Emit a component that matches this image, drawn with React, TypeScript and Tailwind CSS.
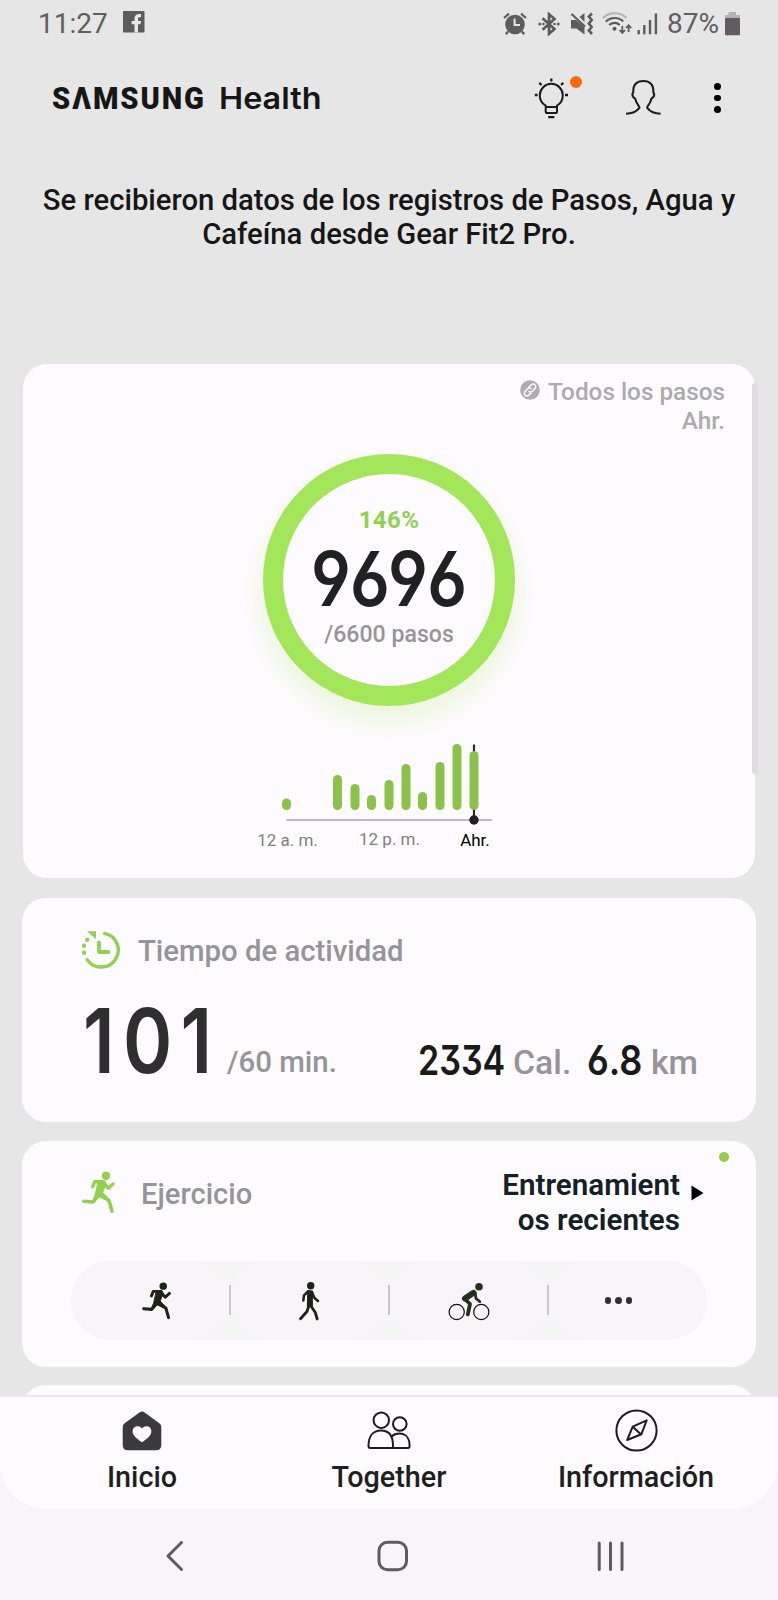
import { type ReactNode } from "react";

interface Bar {
  x: number;
  top: number;
}

const bars: Bar[] = [
  { x: 27.5, top: 60.5 },
  { x: 78.5, top: 37 },
  { x: 96, top: 46 },
  { x: 112.5, top: 57 },
  { x: 130, top: 42 },
  { x: 147, top: 26 },
  { x: 163.5, top: 54 },
  { x: 181, top: 24 },
  { x: 198, top: 6 },
];

/* ---------- icons ---------- */

function AlarmIcon() {
  return (
    <svg width="24" height="24" viewBox="0 0 24 24" fill="none">
      <circle cx="12" cy="12.5" r="9.8" fill="#5c5c5c" />
      <path d="M1 6 L6 1.6 M23 6 L18 1.6" stroke="#5c5c5c" strokeWidth="2.2" />
      <path d="M5 19.5 L2.8 22.3 M19 19.5 L21.2 22.3" stroke="#5c5c5c" strokeWidth="2.2" />
      <path d="M11.6 6.5 V13 H17" stroke="#e6e6e6" strokeWidth="2" />
    </svg>
  );
}

function BluetoothIcon() {
  return (
    <svg width="22" height="24" viewBox="0 0 22 24" fill="none" stroke="#5c5c5c">
      <path d="M4.5 6.2 L16.5 17 L11 21.8 V2.2 L16.5 7 L4.5 17.8" strokeWidth="2.7" />
      <circle cx="1.8" cy="12" r="1.5" fill="#5c5c5c" stroke="none" />
      <circle cx="5.4" cy="12" r="1.3" fill="#5c5c5c" stroke="none" />
      <circle cx="16.4" cy="12" r="1.3" fill="#5c5c5c" stroke="none" />
      <circle cx="20.2" cy="12" r="1.5" fill="#5c5c5c" stroke="none" />
    </svg>
  );
}

function MuteIcon() {
  return (
    <svg width="24" height="24" viewBox="0 0 24 24" fill="none">
      <path d="M1 8 H6 L14.5 15 V22.5 L6.5 16.5 H1 Z" fill="#5c5c5c" />
      <path d="M9.5 5 L14.5 1 V10 Z" fill="#5c5c5c" />
      <path d="M1.5 2 L15 14.5" stroke="#5c5c5c" strokeWidth="2.2" />
      <path d="M22 1.5 L18.8 4.5 L21.7 8 L18.8 11.5 L21.7 15 L18.8 18.5 L22 22" stroke="#5c5c5c" strokeWidth="2.6" />
    </svg>
  );
}

function WifiIcon() {
  return (
    <svg width="30" height="24" viewBox="0 0 30 24" fill="none">
      <path d="M.8 6.2 C7 -.4 18 -.4 24.4 6" stroke="#b2b2b2" strokeWidth="2" />
      <path d="M3.8 9.7 C8.5 4.8 16.5 4.8 21.2 9.4" stroke="#5c5c5c" strokeWidth="2.1" />
      <path d="M7.2 13.1 C10 10.2 15 10.2 17.8 13" stroke="#5c5c5c" strokeWidth="2.1" />
      <circle cx="12.5" cy="16.8" r="2" fill="#5c5c5c" />
      <path d="M20.3 14 V20.5 M17.6 18 L20.3 20.9 L23 18 M26.6 20 V13.5 M23.9 16 L26.6 13.2 L29.3 16" stroke="#5c5c5c" strokeWidth="1.8" />
    </svg>
  );
}

function SignalIcon() {
  return (
    <svg width="21" height="24" viewBox="0 0 21 24" stroke="#5c5c5c" strokeWidth="2.4">
      <path d="M1.7 18 V22.3 M7.3 13 V22.3 M13 8 V22.3 M18.9 1.6 V22.3" />
    </svg>
  );
}

function BatteryIcon() {
  return (
    <svg width="17" height="24" viewBox="0 0 17 24">
      <path d="M4.5 0 H12 V3 H16 V7 H1 V3 H4.5 Z" fill="#b2b2b2" />
      <rect x="1" y="6" width="15" height="17.3" rx="1" fill="#605c60" />
    </svg>
  );
}

function FacebookIcon() {
  return (
    <svg width="22" height="22" viewBox="0 0 22 22">
      <rect width="21.5" height="21.5" rx=".8" fill="#5c5c5c" />
      <path d="M11.5 21.5 V13.2 H8.6 V10 H11.5 V7.6 C11.5 4.6 13.3 3 16 3 H18 V6.2 H16.6 C15.3 6.2 15 6.8 15 7.8 V10 H18 L17.5 13.2 H15 V21.5 Z" fill="#e9e9e9" />
    </svg>
  );
}

function BulbIcon() {
  return (
    <svg width="37" height="44" viewBox="0 0 37 44" fill="none" stroke="#1c1c1c" strokeWidth="2">
      <path d="M12.7 31 V29.6 C9 27.6 6.8 23.7 6.8 19.3 A11.5 11.5 0 0 1 29.8 19.3 C29.8 23.7 27.6 27.6 24 29.6 V35.4 Q24 37 22.4 37 H14.3 Q12.7 37 12.7 35.4 V31 H24" />
      <path d="M15.2 41.2 H21.4 M18.3 2.4 V5.4 M1.8 19 H4.6 M32 19 H35 M6.3 6.9 L8.5 9 M30.3 6.9 L28.1 9" strokeWidth="2.3" />
    </svg>
  );
}

function PersonIcon() {
  return (
    <svg width="39" height="40" viewBox="0 0 39 40" fill="none" stroke="#1c1c1c" strokeWidth="2.1" strokeLinejoin="round">
      <path d="M2 35.8 C7.5 35.7 12.5 33.6 15.4 29.9 C16.2 28.2 12.2 26.4 11.3 20.8 C8.6 19.6 7.6 16.4 9.3 14.2 C8.8 6.6 12.8 3 19.3 3 C25.8 3 29.8 6.6 29.3 14.2 C31 16.4 30 19.6 27.3 20.8 C26.4 26.4 22.4 28.2 23.2 29.9 C26.1 33.6 31.1 35.7 36.6 35.8" />
    </svg>
  );
}

function LinkBadge() {
  return (
    <svg width="20" height="20" viewBox="0 0 20 20" fill="none">
      <circle cx="10" cy="10" r="9.8" fill="#aeaeb0" />
      <g stroke="#fffbff" strokeWidth="1.5" strokeLinecap="round">
        <path d="M9 7 L11.2 4.9 A2.6 2.6 0 0 1 15 8.6 L12.3 11.3 A2.6 2.6 0 0 1 9 11.4" />
        <path d="M11 13 L8.8 15.1 A2.6 2.6 0 0 1 5 11.4 L7.7 8.7 A2.6 2.6 0 0 1 11 8.6" />
      </g>
    </svg>
  );
}

function ActivityIcon() {
  return (
    <svg width="40" height="40" viewBox="0 0 40 40" fill="none" stroke="#92d050" strokeLinecap="round">
      <path d="M23.6 3.4 A17 17 0 1 1 6.2 29.6" strokeWidth="3.4" />
      <path d="M18 12.5 V22 H27.5" strokeWidth="3.8" strokeLinejoin="round" />
      <path d="M6 1.3 H15 V9.3 Z" fill="#92d050" stroke="none" />
      <g fill="#92d050" stroke="none">
        <circle cx="6.2" cy="9.7" r="2.2" />
        <circle cx="3" cy="15.8" r="2.2" />
        <circle cx="3" cy="22.7" r="2.2" />
      </g>
    </svg>
  );
}

function RunnerIcon({ size, color }: { size: number; color: string }) {
  return (
    <svg width={size * 0.77} height={size} viewBox="0 0 33 43" fill="none" stroke={color} strokeWidth="3.3" strokeLinecap="round" strokeLinejoin="round">
      <circle cx="24" cy="4.7" r="4.2" fill={color} stroke="none" />
      <path d="M10.6 15.7 L12.7 10.6 H20 M21.5 12 L26.3 17.2 L31 12.9" />
      <path d="M16.5 9.7 H22.5 L24 13 L20.6 21.5 L26 27.5 L25 29 L17 26 L12.5 31 L10.5 30 L13 24 Z" fill={color} strokeWidth="1" />
      <path d="M15.5 25 L10.9 31 L1.8 30.3" strokeWidth="3.5" />
      <path d="M17.5 23.8 L27 29.6 L30 40.3" strokeWidth="3.5" />
    </svg>
  );
}

function WalkerIcon() {
  return (
    <svg width="23" height="40" viewBox="0 0 23 40" fill="none" stroke="#1d2319" strokeWidth="2.8" strokeLinecap="round" strokeLinejoin="round">
      <circle cx="12.7" cy="4.7" r="3.7" fill="#1d2319" stroke="none" />
      <path d="M10 10.5 L6 14.3 L5.3 19.5 M14 11 L16.3 16.8 L20 20" strokeWidth="2.5" />
      <path d="M10 9.8 L14 10.2 L14.2 25 H9.7 Z" fill="#1d2319" strokeWidth="1.6" />
      <path d="M10.8 25 L9 30.5 L2.5 37.7 M13 25 L17.3 31.5 L19.2 38" />
    </svg>
  );
}

function CyclistIcon() {
  return (
    <svg width="44" height="40" viewBox="0 0 44 40" fill="none" stroke="#25301f" strokeLinecap="round" strokeLinejoin="round">
      <circle cx="9.7" cy="31" r="7.6" stroke="#111" strokeWidth="1.2" />
      <circle cx="34.3" cy="31" r="7.6" stroke="#111" strokeWidth="1.2" />
      <circle cx="32" cy="5.7" r="3.8" fill="#25301f" stroke="none" />
      <path d="M18 17.5 L26.5 11.8" strokeWidth="6" />
      <path d="M28.2 12 L29 17.5 L32.8 20.6" strokeWidth="2.8" />
      <path d="M18 18 L23 23 L20.8 33.3" strokeWidth="3.8" />
    </svg>
  );
}

function HomeIcon() {
  return (
    <svg width="40" height="40" viewBox="0 0 40 40">
      <path d="M17.4 1.6 Q20 -.6 22.6 1.6 L37 12 Q39.3 13.6 39.3 16 V34 Q39.3 39.3 34 39.3 H6 Q.7 39.3 .7 34 V16 Q.7 13.6 3 12 Z" fill="#3a393b" />
      <path d="M20 31.3 C14.5 27.5 10.6 24.4 10.6 20.2 C10.6 15 17.2 13.3 20 17.6 C22.8 13.3 29.4 15 29.4 20.2 C29.4 24.4 25.5 27.5 20 31.3 Z" fill="#fffbff" />
    </svg>
  );
}

function PeopleIcon() {
  return (
    <svg width="44" height="40" viewBox="0 0 44 40" fill="none" stroke="#1c1c1c" strokeWidth="2" strokeLinejoin="round">
      <circle cx="14.3" cy="9.2" r="7.7" />
      <circle cx="32.8" cy="13" r="6.8" />
      <path d="M1.5 35 C1.5 25.5 6 19.6 14 19.6 C22 19.6 26 25.5 26 35 V36.9 H3.2 Q1.5 36.9 1.5 35 Z" />
      <path d="M24.6 25.6 C26.5 23.6 29.5 22.6 32.5 22.6 C39 22.6 42.6 27.6 42.6 35 Q42.6 36.9 41 36.9 H26" />
    </svg>
  );
}

function CompassIcon() {
  return (
    <svg width="43" height="43" viewBox="0 0 43 43" fill="none" stroke="#1c1c1c" strokeWidth="2" strokeLinejoin="round">
      <circle cx="21.5" cy="21.5" r="20.1" />
      <path d="M31.7 11.3 L26.3 25.3 L12.2 31 L17.7 17.7 Z M17.7 17.7 L25.8 25.3" />
    </svg>
  );
}

/* ---------- building blocks ---------- */

// Condensed digits with open six and nine and a flat-topped three
function Figure({ children, className }: { children: ReactNode; className: string }) {
  return (
    <span
      className={`inline-block whitespace-nowrap origin-left font-['Inter',sans-serif] [font-feature-settings:'cv03','cv04','cv09'] ${className}`}
    >
      {children}
    </span>
  );
}

function StatusBar() {
  return (
    <div className="h-12 flex items-center justify-between pl-[38px] pr-[37px] text-[28px] leading-none text-[#5f5f5f]">
      <div className="flex items-center gap-[15px]">
        <span>11:27</span>
        <span className="-mt-1"><FacebookIcon /></span>
      </div>
      <div className="flex items-center">
        <span className="mr-[11px]"><AlarmIcon /></span>
        <span className="mr-[10px]"><BluetoothIcon /></span>
        <span className="mr-[8px]"><MuteIcon /></span>
        <span className="mr-[5px]"><WifiIcon /></span>
        <span className="mr-[9px]"><SignalIcon /></span>
        <span className="mr-[5px] w-[52px] whitespace-nowrap">87%</span>
        <BatteryIcon />
      </div>
    </div>
  );
}

function Header() {
  return (
    <header className="h-[100px] flex items-center pl-[51px] pr-[57px] text-[#161616]">
      <svg width="275" height="40" viewBox="0 0 275 40" fill="#161616" aria-label="Samsung Health">
        <g transform="scale(.94 1)" fontFamily="Roboto, sans-serif" fontWeight="900" fontSize="31">
          <text x="1.2" y="31" textLength="161.5" lengthAdjust="spacing">SΛMSUNG</text>
        </g>
        <text x="168" y="31" textLength="102.5" lengthAdjust="spacingAndGlyphs" fontFamily="Inter, sans-serif" fontWeight="600" fontSize="30.5">Health</text>
      </svg>
      <div className="ml-auto flex items-center">
        <div className="relative mr-[54px]">
          <BulbIcon />
          <span className="absolute left-[37px] top-0 size-[11.5px] rounded-full bg-[#fb6a0c]" />
        </div>
        <span className="mr-[51px]"><PersonIcon /></span>
        <div className="flex flex-col gap-[5px]">
          <span className="size-[6.6px] rounded-full bg-black" />
          <span className="size-[6.6px] rounded-full bg-black" />
          <span className="size-[6.6px] rounded-full bg-black" />
        </div>
      </div>
    </header>
  );
}

function StepsCard() {
  return (
    <section className="relative mx-[23px] h-[514px] rounded-3xl bg-[#fefbff] flex flex-col items-center pt-[13px]">
      <div className="self-stretch pr-[30px] text-right text-[24.3px] leading-[29px] font-medium text-[#acaaae]">
        <div className="flex justify-end items-center gap-2">
          <span className="-mt-[3px]"><LinkBadge /></span>
          <span>Todos los pasos</span>
        </div>
        <div>Ahr.</div>
      </div>

      {/* Goal ring */}
      <div className="mt-[19px] size-[252px] rounded-full border-20 border-[#a4e65a] shadow-[0_14px_26px_3px_rgba(164,230,90,0.2)] flex flex-col items-center">
        <span className="mt-[31px] text-[24px] leading-[30px] font-bold text-[#92d050] tracking-[0.4px]">146%</span>
        <div className="mt-[10px] h-[68px] w-[156px]">
          <Figure className="text-[75px] leading-[68px] font-semibold text-[#1f2220] scale-x-[0.88]">9696</Figure>
        </div>
        <span className="mt-[7px] text-[23.1px] leading-[30px] font-medium text-[#969498]">/6600 pasos</span>
      </div>

      {/* Hourly bars */}
      <svg className="mt-8" width="270" height="116" viewBox="-5 0 270 116">
        <path d="M27.5 82 H233" stroke="#a9a7ab" strokeWidth="1.3" />
        <path d="M215 6.5 V82" stroke="#2b2b2b" strokeWidth="2.2" />
        {bars.map((bar) => (
          <rect key={bar.x} x={bar.x - 4.5} y={bar.top} width="9" height={72 - bar.top} rx="4.5" fill="#8bc34a" />
        ))}
        <rect x="210.5" y="13" width="9" height="59" rx="4.5" fill="#8bc34a" />
        <circle cx="215" cy="82" r="4.7" fill="#1f1f1f" />
        <g fontFamily="Roboto, sans-serif" fontSize="17" textAnchor="middle">
          <text x="28.5" y="108" fill="#807e82">12 a. m.</text>
          <text x="130.5" y="107" fill="#807e82">12 p. m.</text>
          <text x="216" y="108" fill="#000">Ahr.</text>
        </g>
      </svg>

      {/* Scroll thumb */}
      <div className="absolute left-[729px] top-[19px] w-[6px] h-[391px] rounded-full bg-[#dedcde]" />
    </section>
  );
}

function ActivityCard() {
  return (
    <section className="mx-[22px] h-[224px] rounded-3xl bg-[#fefbff] pl-[59px] pt-8">
      <div className="flex items-center h-10 gap-[17px]">
        <ActivityIcon />
        <span className="mt-[3px] text-[29.3px] font-medium text-[#969498]">Tiempo de actividad</span>
      </div>
      <div className="mt-4 flex items-baseline text-[#969498] font-medium">
        <div className="w-[146px] pl-[2px]">
          <Figure className="text-[90px] leading-[110px] tracking-[10px] font-semibold text-[#2f2f2f] scale-x-[0.83]">101</Figure>
        </div>
        <span className="w-[191px] text-[29.4px] -translate-y-px">/60 min.</span>
        <div className="w-[95px] translate-y-[2px]">
          <Figure className="text-[41px] font-semibold text-[#1a1a1a] scale-x-[0.83]">2334</Figure>
        </div>
        <span className="w-[74px] text-[33.8px] translate-y-[1px]">Cal.</span>
        <div className="w-[64px] translate-y-[2px]">
          <Figure className="text-[41px] font-semibold text-[#1a1a1a] scale-x-[0.88]">6.8</Figure>
        </div>
        <span className="text-[33.8px] translate-y-[1px]">km</span>
      </div>
    </section>
  );
}

const cells: ReactNode[] = [
  <RunnerIcon size={38} color="#1d2319" />,
  <WalkerIcon />,
  <CyclistIcon />,
  <span className="flex gap-[4px]">
    <span className="size-[6.5px] rounded-full bg-[#303030]" />
    <span className="size-[6.5px] rounded-full bg-[#303030]" />
    <span className="size-[6.5px] rounded-full bg-[#303030]" />
  </span>,
];

function ExerciseCard() {
  return (
    <section className="relative mx-[22px] h-[226px] rounded-3xl bg-[#fefbff] pt-[26px]">
      <span className="absolute left-[697px] top-[11px] size-[9.5px] rounded-full bg-[#97cb40]" />
      <div className="flex h-[70px] pl-[60px] pr-[52px]">
        <span className="mt-[4px]"><RunnerIcon size={43} color="#92d050" /></span>
        <span className="ml-[26px] mt-[6px] text-[29.1px] leading-[43px] font-medium text-[#969498]">Ejercicio</span>
        <div className="ml-auto flex">
          <div className="w-[184px] mt-[1px] text-right text-[29.6px] leading-[35px] font-semibold text-[#142026]">
            <div>Entrenamient</div>
            <div>os recientes</div>
          </div>
          <svg className="ml-[11px] mt-[18px]" width="13" height="16" viewBox="0 0 13 16">
            <path d="M.5 .5 L12.5 8 L.5 15.5 Z" fill="#000" />
          </svg>
        </div>
      </div>
      <div className="mt-6 ml-[49px] w-[636px] h-[79px] flex rounded-full bg-[#f5f5f6]">
        {cells.map((cell, i) => (
          <div key={i} className="relative flex-1 flex items-center justify-center rounded-full bg-[#f8f4f8]">
            <span className={i === 0 ? "ml-[12px]" : i === 3 ? "-ml-[18px]" : ""}>{cell}</span>
            {i < 3 && <span className="absolute z-10 -right-px top-[24px] w-[2px] h-[30px] bg-[#c8c6ca]" />}
          </div>
        ))}
      </div>
    </section>
  );
}

function NavItem({ icon, label }: { icon: ReactNode; label: string }) {
  return (
    <div className="w-[247px] flex flex-col items-center">
      <div className="h-[43px] flex items-center">{icon}</div>
      <span className="mt-[7px] text-[28.8px] leading-[36px] font-medium text-[#1f1f1f]">{label}</span>
    </div>
  );
}

export default function App() {
  return (
    <div className="w-[778px] h-[1600px] overflow-hidden flex flex-col bg-[#f8f4f8] font-['Roboto',sans-serif]">
      <div className="h-[1395px] shrink-0 overflow-hidden bg-[#e6e6e6]">
        <StatusBar />
        <Header />
        <p className="h-[216px] pt-[34.5px] text-center text-[29.25px] leading-[34.5px] font-medium text-[#161616]">
          Se recibieron datos de los registros de Pasos, Agua y
          <br />
          Cafeína desde Gear Fit2 Pro.
        </p>
        <div className="flex flex-col">
          <StepsCard />
          <div className="h-5" />
          <ActivityCard />
          <div className="h-[19px]" />
          <ExerciseCard />
          <div className="mt-[18px] mx-[22px] h-20 rounded-3xl bg-[#fefbff]" />
        </div>
      </div>

      <div className="h-[114px] shrink-0 bg-[#f8f4f8]">
        <nav className="h-full rounded-b-[46px] border-t-2 border-[#e9e7ea] bg-[#fefbff] flex justify-center pt-[12px]">
          <NavItem icon={<HomeIcon />} label="Inicio" />
          <NavItem icon={<PeopleIcon />} label="Together" />
          <NavItem icon={<CompassIcon />} label="Información" />
        </nav>
      </div>

      {/* System buttons */}
      <div className="flex-1 flex items-center pl-[165px] pt-[3px]">
        <svg width="460" height="32" viewBox="0 0 460 32" fill="none" stroke="#5d5b5e" strokeWidth="3" strokeLinecap="round" strokeLinejoin="round">
          <path d="M16.5 2.5 L3 16 L16.5 29.5" />
          <rect x="214" y="2.3" width="27.5" height="27.5" rx="8.5" />
          <path d="M434.2 3 V29.5 M445.5 3 V29.5 M457 3 V29.5" />
        </svg>
      </div>
    </div>
  );
}
